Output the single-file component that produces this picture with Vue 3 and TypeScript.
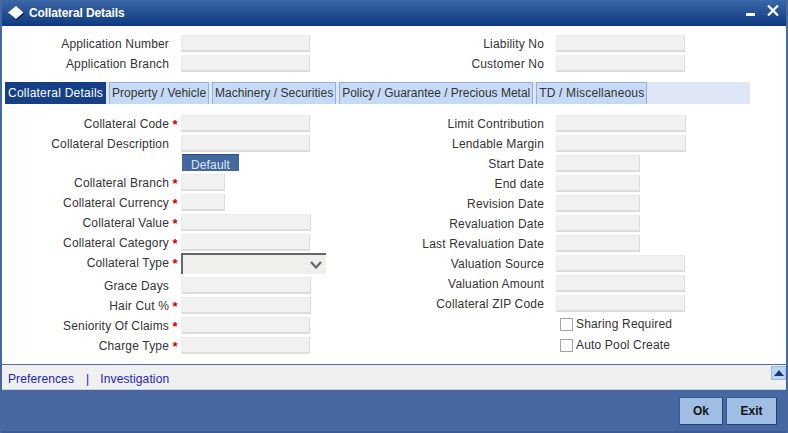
<script setup lang="ts">
interface Field { label: string; req?: boolean; w: number; h?: number; kind?: string }
const tabs = ['Collateral Details', 'Property / Vehicle', 'Machinery / Securities', 'Policy / Guarantee / Precious Metal', 'TD / Miscellaneous']
const left: Field[] = [
  { label: 'Collateral Code', req: true, w: 129 },
  { label: 'Collateral Description', w: 129 },
  { label: '', w: 57, kind: 'button' },
  { label: 'Collateral Branch', req: true, w: 44 },
  { label: 'Collateral Currency', req: true, w: 44 },
  { label: 'Collateral Value', req: true, w: 130 },
  { label: 'Collateral Category', req: true, w: 129 },
  { label: 'Collateral Type', req: true, w: 145, kind: 'select' },
  { label: 'Grace Days', w: 130 },
  { label: 'Hair Cut %', req: true, w: 130 },
  { label: 'Seniority Of Claims', req: true, w: 129 },
  { label: 'Charge Type', req: true, w: 129 },
]
const right: Field[] = [
  { label: 'Limit Contribution', w: 130 },
  { label: 'Lendable Margin', w: 130 },
  { label: 'Start Date', w: 84 },
  { label: 'End date', w: 84 },
  { label: 'Revision Date', w: 84 },
  { label: 'Revaluation Date', w: 84 },
  { label: 'Last Revaluation Date', w: 84 },
  { label: 'Valuation Source', w: 129 },
  { label: 'Valuation Amount', w: 129 },
  { label: 'Collateral ZIP Code', w: 129 },
]
</script>

<template>
  <div class="win">
    <header class="title">
      <svg class="dia" width="18" height="16" viewBox="0 0 18 16">
        <path d="M10 2 L18 8.5 L10 15.5 L2 8.5 Z" fill="#0b2a62" />
        <path d="M9 1 L16.5 7.5 L9 14 L1 7.5 Z" fill="#fff" />
      </svg>
      <span class="ttext">Collateral Details</span>
      <span class="min"></span>
      <svg class="x" width="12" height="11" viewBox="0 0 12 11"><path d="M1 0.5 L11 10.5 M11 0.5 L1 10.5" stroke="#fff" stroke-width="2.2" /></svg>
    </header>

    <main class="body">
      <section class="top">
        <div class="col lc">
          <div class="row"><label class="lab">Application Number</label><i class="star"></i><span class="inp" style="width:129px"></span></div>
          <div class="row"><label class="lab">Application Branch</label><i class="star"></i><span class="inp" style="width:129px"></span></div>
        </div>
        <div class="col rc">
          <div class="row"><label class="lab">Liability No</label><span class="inp" style="width:129px"></span></div>
          <div class="row"><label class="lab">Customer No</label><span class="inp" style="width:129px"></span></div>
        </div>
      </section>

      <nav class="tabs">
        <span v-for="(t, i) in tabs" :key="t" class="tab" :class="{ on: i === 0 }">{{ t }}</span>
      </nav>

      <section class="form">
        <div class="col lc">
          <div v-for="f in left" :key="f.label + f.w" class="row" :class="f.kind">
            <label class="lab">{{ f.label }}</label>
            <i class="star">{{ f.req ? '*' : '' }}</i>
            <button v-if="f.kind === 'button'" class="def">Default</button>
            <span v-else-if="f.kind === 'select'" class="sel">
              <svg width="12" height="8" viewBox="0 0 12 8"><path d="M1 1 L6 6.5 L11 1" fill="none" stroke="#666" stroke-width="2.2" /></svg>
            </span>
            <span v-else class="inp" :style="{ width: f.w + 'px' }"></span>
          </div>
        </div>
        <div class="col rc">
          <div v-for="f in right" :key="f.label" class="row">
            <label class="lab">{{ f.label }}</label>
            <span class="inp" :style="{ width: f.w + 'px' }"></span>
          </div>
          <label class="chk first"><span class="box"></span>Sharing Required</label>
          <label class="chk"><span class="box"></span>Auto Pool Create</label>
        </div>
      </section>
    </main>

    <div class="links">
      <a>Preferences</a><span class="sep">|</span><a>Investigation</a>
      <span class="up"><svg width="10" height="6" viewBox="0 0 10 6"><path d="M5 0 L10 6 L0 6 Z" fill="#123a7c" /></svg></span>
    </div>

    <footer class="foot">
      <button class="btn">Ok</button>
      <button class="btn exit">Exit</button>
    </footer>
  </div>
</template>

<style>
html, body { margin: 0; background: #fff; }
</style>

<style scoped>
.win {
  width: 788px; height: 433px; box-sizing: border-box;
  display: flex; flex-direction: column;
  border-left: 2px solid #4668a0; border-right: 2px solid #4668a0;
  font: 12px "Liberation Sans", Arial, sans-serif; color: #333;
  overflow: hidden;
}
.title {
  height: 26px; flex: none; margin: 0 -2px; display: flex; align-items: center;
  background: linear-gradient(#3a67a6, #103a80);
  color: #fff; font-weight: bold; position: relative;
}
.dia { margin-left: 7px; }
.ttext { margin-left: 4px; letter-spacing: -0.1px; }
.min { position: absolute; left: 746px; top: 13px; width: 9px; height: 3px; background: #fff; }
.x { position: absolute; left: 767px; top: 5px; }
.body { flex: none; height: 338px; background: #fff; }
.top { display: flex; padding-top: 9px; height: 47px; }
.col { display: flex; flex-direction: column; }
.lc { width: 362px; }
.row { display: flex; height: 20px; align-items: flex-start; }
.lab { text-align: right; line-height: 19px; white-space: nowrap; letter-spacing: 0.17px; }
.lc .lab { width: 167px; flex: none; }
.rc .lab { width: 180px; flex: none; margin-right: 12px; }
.star { width: 12px; flex: none; color: #d00000; font: bold 13px/19px "Liberation Sans", Arial, sans-serif; text-align: center; }
.inp {
  display: block; height: 17px; box-sizing: border-box; background: #f1f1f1;
  border: 1px solid #ececec; border-right-color: #dcdcdc; border-bottom: 2px solid #dcdcdc;
}
.tabs {
  width: 745px; height: 22px; margin-left: 3px; background: #dfe7f6;
  display: flex; gap: 3px;
}
.tab {
  box-sizing: border-box; height: 22px; line-height: 21px; padding: 0 2px; background: #c5daf6;
  border: 1px solid #96b0d6; border-bottom: none; color: #333; white-space: nowrap; letter-spacing: 0;
}
.tab:nth-child(5) { letter-spacing: 0.17px; }
.tab.on { background: #153f86; color: #fff; border-color: #153f86; letter-spacing: 0.24px; }
.form { display: flex; padding-top: 11px; }
.row.button { height: 19px; }
.row.button .def { margin: -1px 0 0 1px; }
.def {
  width: 57px; height: 17px; padding: 0; border: none; background: #44679f; color: #dfe7f5;
  font: 12px "Liberation Sans", Arial, sans-serif; line-height: 20px; overflow: hidden;
  border-top: 1px solid #2c4f8c; letter-spacing: 0.15px;
}
.row.select { height: 24px; margin-top: -1px; }
.row.select .lab, .row.select .star { padding-top: 1px; }
.sel {
  display: flex; align-items: center; justify-content: flex-end; padding-right: 4px;
  width: 145px; height: 21px; box-sizing: border-box; background: #f0efeb;
  border-top: 2px solid #666; border-left: 2px solid #666;
}
.chk { display: flex; align-items: center; margin-left: 196px; height: 13px; line-height: 13px; gap: 3px; margin-top: 8px; letter-spacing: 0.17px; }
.chk.first { margin-top: 3px; }
.box { width: 11px; height: 11px; border: 1px solid #a4a4a4; background: #fff; display: block; }
.links {
  height: 26px; flex: none; box-sizing: border-box; background: #f0f0f0;
  border-top: 1px solid #4f6d9f; border-bottom: 1px solid #c3d2e9; padding-top: 3px;
  display: flex; align-items: center; padding-left: 6px; color: #2222bb; position: relative; letter-spacing: 0.12px;
}
.sep { margin: 0 11px 0 12px; }
.up {
  position: absolute; left: 769px; top: 1px; width: 15px; height: 14px; box-sizing: border-box;
  background: #bdd3f0; border: 1px solid #9fb8dc;
  display: flex; align-items: center; justify-content: center;
}
.foot {
  flex: 1; margin: 0 -2px; background: #4767a0;
  display: flex; justify-content: flex-end; gap: 3px; padding: 7px 11px 0 0; box-sizing: border-box;
  border-bottom: 2px solid #3d5b93;
}
.btn {
  width: 44px; height: 28px; padding: 0; background: #a0bde3; color: #111;
  border: 1px solid #3c5a90; border-right-color: #27406f; border-bottom-color: #27406f;
  font: bold 12px "Liberation Sans", Arial, sans-serif;
}
.exit { width: 51px; }
</style>
